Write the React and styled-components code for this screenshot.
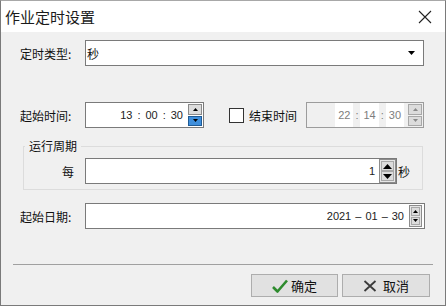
import React from 'react'
import styled, { createGlobalStyle } from 'styled-components'

const GlobalStyle = createGlobalStyle`
  html, body { margin: 0; padding: 0; background: #ffffff; }
  body { font-family: "Noto Sans CJK SC", "Liberation Sans", sans-serif; }
  * { box-sizing: border-box; }
`

const Window = styled.div`
  width: 446px;
  height: 306px;
  border: 1px solid #7a7a7a;
  border-top-color: #a8a8a8;
  background: #f0f0f0;
  display: flex;
  flex-direction: column;
  overflow: hidden;
`

const TitleBar = styled.div`
  height: 31px;
  background: #ffffff;
  display: flex;
  align-items: center;
  justify-content: space-between;
  padding: 0 13px 0 4px;
  font-size: 15px;
  color: #1b1b1b;
`

const Body = styled.div`
  flex: 1;
  display: flex;
  flex-direction: column;
  padding-top: 8px;
`

const Row = styled.div`
  display: flex;
  align-items: center;
  height: 26px;
  margin-top: ${({ $top }) => $top || 0}px;
  padding-left: ${({ $pad }) => ($pad === undefined ? 19 : $pad)}px;
`

const Label = styled.div`
  width: ${({ $w }) => $w || 65}px;
  flex-shrink: 0;
  font-size: 12px;
  color: #111;
  text-align: ${({ $right }) => ($right ? 'right' : 'left')};
  padding-right: ${({ $right }) => ($right ? 11 : 0)}px;
`

const Combo = styled.div`
  width: 339px;
  height: 26px;
  background: #fff;
  border: 1px solid #7a7a7a;
  display: flex;
  align-items: center;
  justify-content: space-between;
  padding: 0 8px 0 1px;
  font-size: 12px;
  color: #111;
`

const Field = styled.div`
  width: ${({ $w }) => $w}px;
  height: 26px;
  background: ${({ $off }) => ($off ? '#f0f0f0' : '#fff')};
  border: 1px solid ${({ $off }) => ($off ? '#9c9c9c' : '#7a7a7a')};
  display: flex;
  align-items: center;
  justify-content: flex-end;
  padding-right: ${({ $pr }) => ($pr === undefined ? 1 : $pr)}px;
  font-family: "Liberation Sans", Arial, sans-serif;
  font-size: 11px;
  color: ${({ $off }) => ($off ? '#7d7d7d' : '#222')};
`

const Digits = styled.span`
  align-self: stretch;
  display: flex;
  align-items: center;
  padding: 0 ${({ $cell }) => ($cell ? 3 : 0)}px;
  background: ${({ $cell }) => ($cell ? '#fff' : 'transparent')};
`

const Sep = styled.span`
  padding: 0 ${({ $w }) => ($w === undefined ? 5 : $w)}px;
`

const Spin = styled.div`
  display: flex;
  flex-direction: column;
  gap: ${({ $gap }) => ($gap === undefined ? 1 : $gap)}px;
  width: ${({ $w }) => $w}px;
  height: ${({ $h }) => $h}px;
  margin-left: ${({ $ml }) => $ml || 0}px;
  border: ${({ $frame }) => ($frame ? '1px solid #8c8c8c' : 'none')};
  padding: ${({ $frame }) => ($frame ? 1 : 0)}px;
  background: ${({ $frame }) => ($frame ? '#e6e6e6' : 'transparent')};
`

const SpinBtn = styled.div`
  flex: 1;
  display: flex;
  align-items: center;
  justify-content: center;
  background: ${({ $hot }) => ($hot ? '#3f8fdc' : '#dcdcdc')};
  border: 1px solid ${({ $hot, $dim }) => ($hot ? '#1f5b95' : $dim ? '#a8a8a8' : '#8a8a8a')};
`

const Arrow = ({ up, color = '#000', w = 5, h = 3 }) => (
  <svg width={w} height={h} viewBox={`0 0 ${w} ${h}`}>
    <path d={up ? `M0 ${h}L${w / 2} 0L${w} ${h}Z` : `M0 0L${w} 0L${w / 2} ${h}Z`} fill={color} />
  </svg>
)

const Check = styled.div`
  width: 15px;
  height: 15px;
  margin-left: 25px;
  background: #fff;
  border: 1px solid #333;
`

const Inline = styled.div`
  font-size: 12px;
  color: #111;
  margin-left: ${({ $ml }) => $ml || 0}px;
`

const Group = styled.fieldset`
  margin: 12px 0 0 22px;
  width: 400px;
  padding: 6px 0 5px;
  border: 1px solid #dcdcdc;
  min-width: 0;
`

const Legend = styled.legend`
  margin-left: 1px;
  padding: 0 4px;
  font-size: 12px;
  line-height: 12px;
  color: #111;
`

const Divider = styled.div`
  margin: 35px 12px 0 12px;
  height: 1px;
  background: #a0a0a0;
`

const Footer = styled.div`
  display: flex;
  justify-content: flex-end;
  gap: 4px;
  padding-right: 15px;
  margin-top: 9px;
`

const Button = styled.div`
  width: ${({ $w }) => $w}px;
  height: 23px;
  background: #e1e1e1;
  border: 1px solid #adadad;
  display: flex;
  align-items: center;
  justify-content: center;
  gap: 3px;
  font-size: 13px;
  color: #111;
`

function TimeDigits({ parts, off }) {
  return parts.map((p, i) => (
    <React.Fragment key={i}>
      {i > 0 && <Sep $w={off ? 2 : 5}>:</Sep>}
      <Digits $cell={off}>{p}</Digits>
    </React.Fragment>
  ))
}

export default function App() {
  return (
    <>
      <GlobalStyle />
      <Window>
        <TitleBar>
          <span>作业定时设置</span>
          <svg width="14" height="14" viewBox="0 0 14 14">
            <path d="M1 1L13 13M13 1L1 13" stroke="#222" strokeWidth="1.1" />
          </svg>
        </TitleBar>
        <Body>
          <Row>
            <Label>定时类型:</Label>
            <Combo>
              <span>秒</span>
              <Arrow w={7} h={4} />
            </Combo>
          </Row>

          <Row $top={36}>
            <Label>起始时间:</Label>
            <Field $w={119}>
              <TimeDigits parts={['13', '00', '30']} />
              <Spin $w={14} $h={22} $ml={5}>
                <SpinBtn><Arrow up /></SpinBtn>
                <SpinBtn $hot><Arrow /></SpinBtn>
              </Spin>
            </Field>
            <Check />
            <Inline $ml={5}>结束时间</Inline>
            <Field $w={118} $off style={{ marginLeft: 9 }}>
              <TimeDigits parts={['22', '14', '30']} off />
              <Spin $w={14} $h={22} $ml={4}>
                <SpinBtn $dim><Arrow up color="#8a8a8a" /></SpinBtn>
                <SpinBtn $dim><Arrow color="#8a8a8a" /></SpinBtn>
              </Spin>
            </Field>
          </Row>

          <Group>
            <Legend>运行周期</Legend>
            <Row $pad={0}>
              <Label $w={61} $right>每</Label>
              <Field $w={312} $pr={0}>
                <span>1</span>
                <Spin $w={17} $h={24} $ml={4} $gap={0} $frame>
                  <SpinBtn $dim><Arrow up w={9} h={5} /></SpinBtn>
                  <SpinBtn $dim><Arrow w={9} h={5} /></SpinBtn>
                </Spin>
              </Field>
              <Inline $ml={1}>秒</Inline>
            </Row>
          </Group>

          <Row $top={13}>
            <Label>起始日期:</Label>
            <Field $w={340} $pr={2}>
              <span>2021</span>
              <Sep $w={4}>–</Sep>
              <span>01</span>
              <Sep $w={4}>–</Sep>
              <span>30</span>
              <Spin $w={13} $h={22} $ml={5} $frame>
                <SpinBtn $dim><Arrow up /></SpinBtn>
                <SpinBtn $dim><Arrow /></SpinBtn>
              </Spin>
            </Field>
          </Row>

          <Divider />

          <Footer>
            <Button $w={87}>
              <svg width="16" height="14" viewBox="0 0 16 14">
                <path d="M1 8L5.5 12.5L15 1.5" stroke="#2e8b2e" strokeWidth="2.6" fill="none" strokeLinejoin="round" />
              </svg>
              <span>确定</span>
            </Button>
            <Button $w={88}>
              <svg width="14" height="12" viewBox="0 0 14 12">
                <path d="M1.5 1L12.5 11M12.5 1L1.5 11" stroke="#3a3a3a" strokeWidth="1.8" />
              </svg>
              <span style={{ marginLeft: 3 }}>取消</span>
            </Button>
          </Footer>
        </Body>
      </Window>
    </>
  )
}
